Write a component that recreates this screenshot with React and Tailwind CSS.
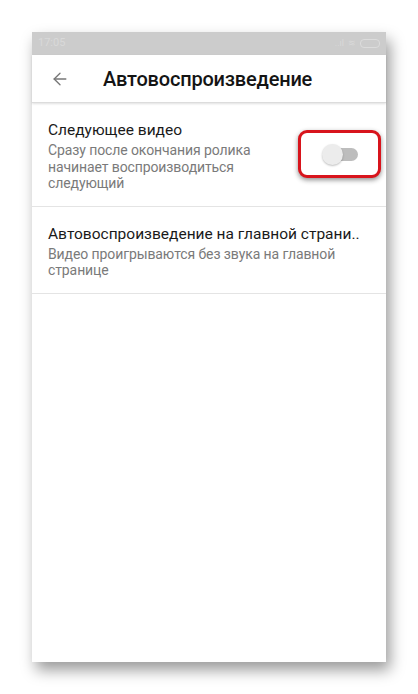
import { ArrowLeft } from 'lucide-react';

function Toggle() {
  return (
    <div className="relative h-[48px] w-[83px] shrink-0 rounded-[9px] border-[3px] border-[#d8141c] bg-white shadow-[0_2px_5px_rgba(0,0,0,0.45)] flex items-center justify-center">
      <div className="relative h-[13px] w-[30px] rounded-full bg-[#bdbdbd] ml-[6px]">
        <div className="absolute left-[-6px] top-[-4px] h-[21px] w-[21px] rounded-full bg-[#ececec] shadow-[0_1px_2px_rgba(0,0,0,0.25)]" />
      </div>
    </div>
  );
}

function Item({ title, subtitle, right }) {
  return (
    <div className="flex items-center border-b border-[#e4e4e4] pl-[16px] pr-[5px]">
      <div className="flex-1 min-w-0 pt-[17px] pb-[14px]">
        <div className="text-[15.5px] leading-[20px] text-[#1a1a1a] whitespace-nowrap">{title}</div>
        <div className="mt-[2px] text-[14px] tracking-[-0.1px] leading-[16.5px] text-[#7a7a7a]">{subtitle}</div>
      </div>
      {right}
    </div>
  );
}

export default function App() {
  return (
    <div className="min-h-[694px] w-[418px] bg-white pt-[32px] pl-[32px]" style={{ fontFamily: 'Roboto, "Noto Sans", sans-serif' }}>
      <div className="flex h-[630px] w-[354px] flex-col bg-white shadow-[4px_8px_14px_rgba(0,0,0,0.4)]">
        <div className="flex h-[23px] items-center justify-between bg-[#cccccc] px-[6px] text-[11px] text-[#d9d9d9]">
          <span>17:05</span>
          <span className="flex items-center gap-[4px]">
            <span className="text-[9px]">..ıl</span>
            <span className="text-[9px]">≋</span>
            <span className="h-[9px] w-[20px] rounded-[4px] border border-[#dcdcdc]" />
          </span>
        </div>
        <div className="flex h-[48px] items-center border-b border-[#dcdcdc] shadow-[0_1px_2px_rgba(0,0,0,0.12)]">
          <ArrowLeft className="ml-[18px] h-[20px] w-[20px] text-[#777]" strokeWidth={1.6} />
          <span className="ml-[33px] text-[20px] font-medium tracking-[-0.2px] text-[#141414]">Автовоспроизведение</span>
        </div>
        <Item
          title="Следующее видео"
          subtitle={<>Сразу после окончания ролика<br />начинает воспроизводиться<br />следующий</>}
          right={<Toggle />}
        />
        <Item
          title="Автовоспроизведение на главной страни.."
          subtitle={<>Видео проигрываются без звука на главной<br />странице</>}
        />
      </div>
    </div>
  );
}
